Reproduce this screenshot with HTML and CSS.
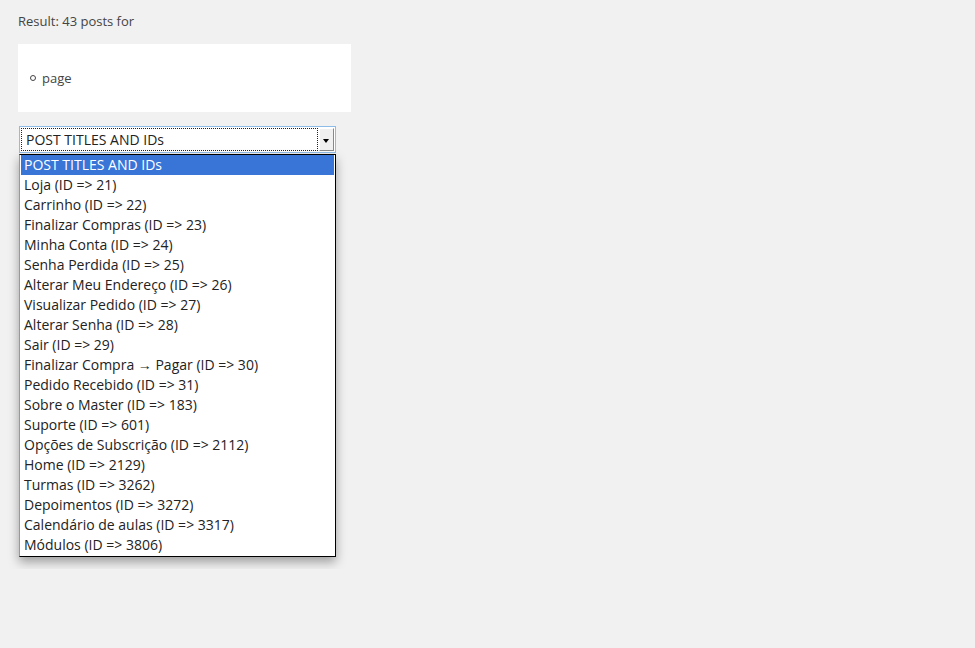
FILE: index.html
```html
<!DOCTYPE html>
<html lang="en">
<head>
    <meta charset="UTF-8">
    <meta name="viewport" content="width=device-width, initial-scale=1.0">
    <title>Post Titles and IDs</title>
    <link rel="stylesheet" href="styles.css">
</head>
<body>
    <div class="wrap">
        <p class="result">Result: 43 posts for</p>

        <div class="types">
            <ul>
                <li>page</li>
            </ul>
        </div>

        <div class="picker">
            <div class="select">
                <span class="select-value">POST TITLES AND IDs</span>
                <span class="select-arrow"></span>
            </div>
            <ul class="options">
                <li class="selected">POST TITLES AND IDs</li>
                <li>Loja (ID =&gt; 21)</li>
                <li>Carrinho (ID =&gt; 22)</li>
                <li>Finalizar Compras (ID =&gt; 23)</li>
                <li>Minha Conta (ID =&gt; 24)</li>
                <li>Senha Perdida (ID =&gt; 25)</li>
                <li>Alterar Meu Endereço (ID =&gt; 26)</li>
                <li>Visualizar Pedido (ID =&gt; 27)</li>
                <li>Alterar Senha (ID =&gt; 28)</li>
                <li>Sair (ID =&gt; 29)</li>
                <li>Finalizar Compra <span class="arrow">→</span> Pagar (ID =&gt; 30)</li>
                <li>Pedido Recebido (ID =&gt; 31)</li>
                <li>Sobre o Master (ID =&gt; 183)</li>
                <li>Suporte (ID =&gt; 601)</li>
                <li>Opções de Subscrição (ID =&gt; 2112)</li>
                <li>Home (ID =&gt; 2129)</li>
                <li>Turmas (ID =&gt; 3262)</li>
                <li>Depoimentos (ID =&gt; 3272)</li>
                <li>Calendário de aulas (ID =&gt; 3317)</li>
                <li>Módulos (ID =&gt; 3806)</li>
            </ul>
        </div>
    </div>
</body>
</html>
```

FILE: styles.css
```css
body {
    margin: 0;
    background: #f1f1f1;
    color: #444;
    font-family: "Open Sans", sans-serif;
    font-size: 13px;
    line-height: 1.4em;
}
.wrap {
    padding: 12px 18px;
}
.result {
    margin: 0 0 14px;
}
.types {
    width: 333px;
    height: 68px;
    background: #fff;
    display: flex;
    align-items: center;
}
.types ul {
    margin: 0;
    padding: 0 0 0 12px;
    list-style: none;
}
.types li {
    display: flex;
    align-items: center;
    gap: 6px;
}
.types li::before {
    content: "";
    width: 4px;
    height: 4px;
    border: 1px solid #444;
    border-radius: 50%;
}

/* open dropdown */
.picker {
    margin-top: 14px;
    width: 318px;
}
.select {
    margin-left: 1px;
    height: 27px;
    box-sizing: border-box;
    border: 1px solid #8fbbe8;
    background: #fff;
    display: flex;
    align-items: stretch;
    padding: 1px;
    color: #222;
    font-size: 14px;
}
.select-value {
    flex: 1;
    border: 1px dotted #222;
    padding-left: 4px;
    line-height: 21px;
    margin-right: 1px;
}
.select-arrow {
    width: 15px;
    position: relative;
    background: #f0f0f0;
    border-top: 1px solid #fff;
    border-left: 1px solid #fff;
    border-right: 1px solid #888;
    border-bottom: 1px solid #888;
    box-sizing: border-box;
}
.select-arrow::after {
    content: "";
    position: absolute;
    left: 3px;
    top: 10px;
    border-left: 3.5px solid transparent;
    border-right: 3.5px solid transparent;
    border-top: 4px solid #000;
}
.options {
    list-style: none;
    margin: 1px 0 0 1px;
    padding: 0 1px 1px;
    width: 317px;
    box-sizing: border-box;
    background: #fff;
    border: 1px solid #000;
    border-left-color: #999;
    box-shadow: 0 5px 10px rgba(0, 0, 0, 0.35);
    font-size: 14px;
    color: #222;
}
.options li {
    height: 20px;
    line-height: 20px;
    padding-left: 3px;
}
.options .arrow {
    font-family: "Liberation Sans", sans-serif;
    font-size: 14px;
    line-height: 1;
}
.options .selected {
    background: #3875d7;
    color: #fff;
}
```
